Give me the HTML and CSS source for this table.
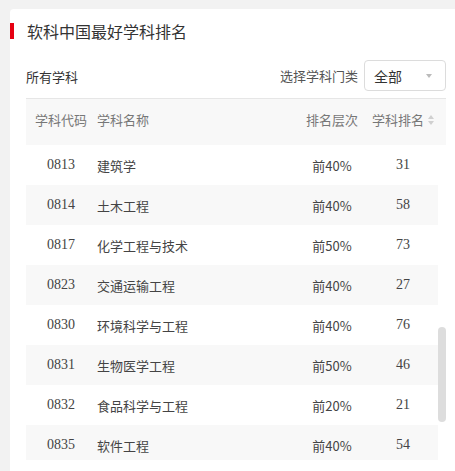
FILE: index.html
```html
<!DOCTYPE html>
<html lang="zh">
<head>
<meta charset="utf-8">
<link rel="stylesheet" href="styles.css">
</head>
<body>
<div class="card">
  <h2 class="title">软科中国最好学科排名</h2>
  <div class="content">
    <div class="filter">
      <span class="all">所有学科</span>
      <div class="pick">
        <span class="pick-label">选择学科门类</span>
        <div class="select"><span>全部</span><i class="arrow"></i></div>
      </div>
    </div>
    <div class="table">
      <div class="thead">
        <div class="c1">学科代码</div>
        <div class="c2">学科名称</div>
        <div class="c3">排名层次</div>
        <div class="c4">学科排名<span class="sort"><i class="up"></i><i class="down"></i></span></div>
      </div>
      <div class="tbody">
        <div class="row"><div class="c1 num">0813</div><div class="c2">建筑学</div><div class="c3">前40%</div><div class="c4 num">31</div></div>
        <div class="row alt"><div class="c1 num">0814</div><div class="c2">土木工程</div><div class="c3">前40%</div><div class="c4 num">58</div></div>
        <div class="row"><div class="c1 num">0817</div><div class="c2">化学工程与技术</div><div class="c3">前50%</div><div class="c4 num">73</div></div>
        <div class="row alt"><div class="c1 num">0823</div><div class="c2">交通运输工程</div><div class="c3">前40%</div><div class="c4 num">27</div></div>
        <div class="row"><div class="c1 num">0830</div><div class="c2">环境科学与工程</div><div class="c3">前40%</div><div class="c4 num">76</div></div>
        <div class="row alt"><div class="c1 num">0831</div><div class="c2">生物医学工程</div><div class="c3">前50%</div><div class="c4 num">46</div></div>
        <div class="row"><div class="c1 num">0832</div><div class="c2">食品科学与工程</div><div class="c3">前20%</div><div class="c4 num">21</div></div>
        <div class="row alt"><div class="c1 num">0835</div><div class="c2">软件工程</div><div class="c3">前40%</div><div class="c4 num">54</div></div>
        <div class="thumb"></div>
      </div>
    </div>
  </div>
</div>
</body>
</html>
```

FILE: styles.css
```css
html, body {
  margin: 0;
  padding: 0;
}
body {
  background: #f2f2f2;
  padding: 9px 0 0 10px;
  height: 471px;
  box-sizing: border-box;
  overflow: hidden;
  font-family: "Noto Sans CJK SC", "Liberation Sans", sans-serif;
  color: #333;
}
.card {
  background: #fff;
  border-top-left-radius: 4px;
  padding-top: 14px;
  height: 462px;
  box-sizing: border-box;
  overflow: hidden;
}
.title {
  margin: 0;
  border-left: 4px solid #e60012;
  padding-left: 13px;
  height: 16px;
  line-height: 16px;
  font-size: 16px;
  font-weight: normal;
  color: #333;
}
.content {
  padding: 21px 9px 0 16px;
}
.filter {
  display: flex;
  justify-content: space-between;
  align-items: center;
  height: 31px;
}
.all {
  font-size: 13px;
  line-height: 16px;
  margin-top: 3px;
}
.pick {
  display: flex;
  align-items: center;
  gap: 6px;
}
.pick-label {
  font-size: 13px;
  color: #555;
}
.select {
  width: 82px;
  height: 31px;
  box-sizing: border-box;
  border: 1px solid #dcdcdc;
  border-radius: 4px;
  display: flex;
  align-items: center;
  justify-content: space-between;
  padding: 0 13px 0 9px;
  font-size: 14px;
  color: #333;
}
.arrow {
  width: 0;
  height: 0;
  border-left: 3.5px solid transparent;
  border-right: 3.5px solid transparent;
  border-top: 4px solid #bbb;
}
.table {
  margin-top: 7px;
}
.thead {
  display: grid;
  grid-template-columns: 70px 200px 72px 70px 8px;
  height: 47px;
  box-sizing: border-box;
  padding-bottom: 5px;
  align-items: center;
  background: #f8f8f8;
  border-top: 1px solid #e6e6e6;
  font-size: 13px;
  color: #777;
}
.c1, .c3, .c4 {
  text-align: center;
}
.c2 {
  padding-left: 1px;
}
.thead .c4 {
  display: flex;
  align-items: center;
  justify-content: center;
  gap: 4px;
}
.sort {
  display: flex;
  flex-direction: column;
  gap: 2px;
}
.sort i {
  width: 0;
  height: 0;
  border-left: 3px solid transparent;
  border-right: 3px solid transparent;
}
.sort .up {
  border-bottom: 4px solid #d0d0d0;
}
.sort .down {
  border-top: 4px solid #d0d0d0;
}
.tbody {
  position: relative;
  height: 315px;
  overflow: hidden;
  border-bottom-right-radius: 4px;
}
.row {
  display: grid;
  grid-template-columns: 70px 200px 72px 70px;
  height: 40px;
  align-items: center;
  width: 412px;
  font-size: 13px;
  color: #444;
}
.row.alt {
  background: #f8f8f8;
}
.num {
  font-family: "Liberation Serif", serif;
  font-size: 14px;
}
.thumb {
  position: absolute;
  right: 0;
  top: 182px;
  width: 8px;
  height: 95px;
  border-radius: 4px;
  background: #dddddd;
}
```
